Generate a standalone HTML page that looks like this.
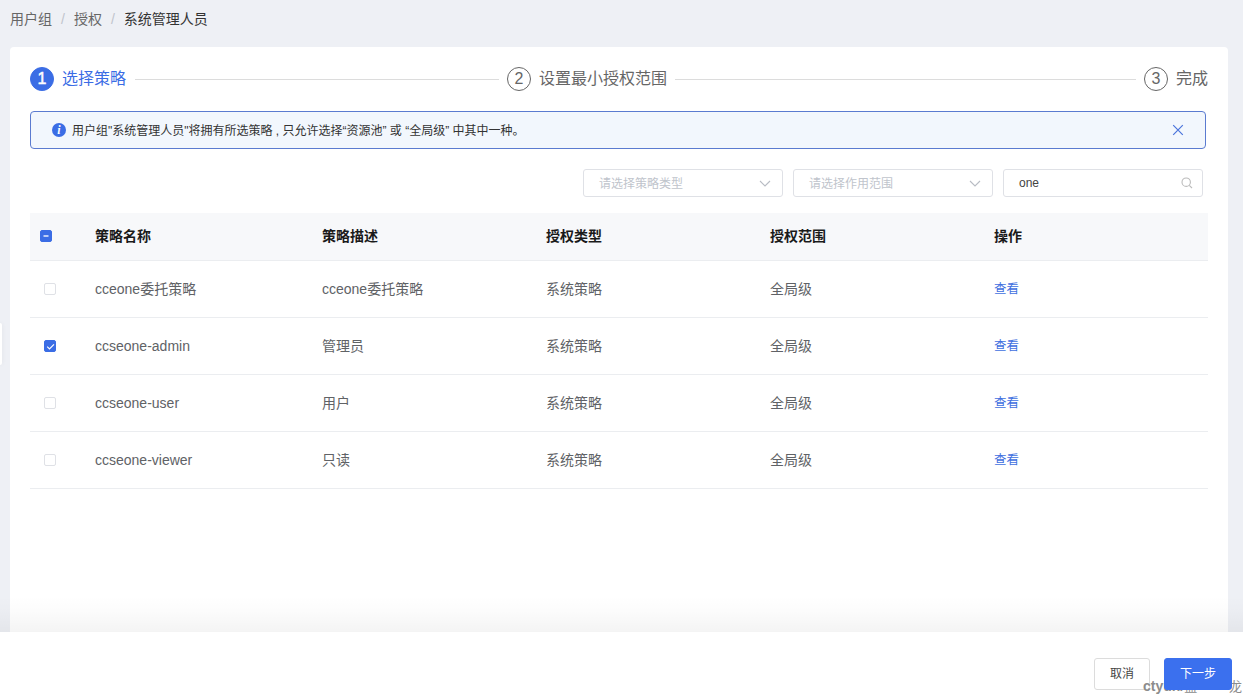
<!DOCTYPE html>
<html lang="zh-CN">
<head>
<meta charset="utf-8">
<title>授权</title>
<style>
*{box-sizing:border-box;margin:0;padding:0}
html,body{width:1243px;height:700px;overflow:hidden}
body{background:#eef0f5;font-family:"Liberation Sans","Noto Sans CJK SC",sans-serif;color:#333;position:relative;font-size:14px}
.crumb{position:absolute;left:10px;top:9px;height:20px;line-height:20px;font-size:14px;color:#666;white-space:nowrap}
.crumb .sep{color:#c0c4cc;margin:0 9px}
.crumb .cur{color:#333}
.card{position:absolute;left:10px;top:47px;width:1218px;height:653px;background:#fff;border-radius:4px}
.step{position:absolute;top:67px;height:24px;line-height:24px;font-size:16px;color:#666;white-space:nowrap}
.step .num{display:inline-block;width:24px;height:24px;border-radius:50%;border:1px solid #666;text-align:center;line-height:22px;font-size:16px;vertical-align:top;margin-right:8px;color:#666}
.step.on{color:#3b6de5}
.step.on .num{background:#3b6de5;border-color:#3b6de5;color:#fff;-webkit-text-stroke:.45px #fff}
.line{position:absolute;top:79px;height:1px;background:#dcdcdc}
.alert{position:absolute;left:30px;top:111px;width:1176px;height:38px;border:1px solid #5b7bd0;border-radius:4px;background:#f2f7fd;font-size:12px;color:#333;line-height:36px;white-space:nowrap}
.alert .ico{position:absolute;left:21px;top:11px;width:14px;height:14px}
.alert .txt{position:absolute;left:41px;top:1px}
.alert .close{position:absolute;left:1141px;top:12px;width:12px;height:12px}
.sel{position:absolute;top:169px;width:200px;height:28px;border:1px solid #dfe1e6;border-radius:3px;background:#fff;font-size:12px;color:#c0c4cc;line-height:28px;padding-left:15px;white-space:nowrap}
.sel svg{position:absolute;right:11px;top:10px}
.sel.inp{color:#444;line-height:26px}
table{position:absolute;left:30px;top:213px;width:1178px;border-collapse:collapse;table-layout:fixed;font-size:14px}
th{height:47px;background:#f7f8fa;text-align:left;font-weight:bold;color:#1a1a1a;padding:0 0 2px;border-bottom:1px solid #ebedf0}
td{height:57px;border-bottom:1px solid #ebedf0;color:#606266;padding:0 0 2px}
td a{color:#3f70e0;font-size:12.5px;text-decoration:none}
.lat{position:relative;top:1px}
.cb{position:absolute;width:12px;height:12px;border:1px solid #dfe1e6;border-radius:2px;background:#fff}
.cb.on{background:#3b6de5;border-color:#3b6de5}
.foot{position:absolute;left:0;top:632px;width:1243px;height:68px;background:#fff}
.shade{position:absolute;left:0;top:596px;width:1243px;height:36px;background:linear-gradient(to bottom,rgba(0,0,0,0),rgba(0,0,0,.012) 40%,rgba(0,0,0,.045))}
.btn{position:absolute;top:658px;height:32px;line-height:30px;border:1px solid #dcdcdc;border-radius:3px;font-size:12px;text-align:center;color:#444;background:#fff}
.btn.pri{background:#3b70ee;border-color:#3b70ee;color:#fff}
.wm{position:absolute;left:1143px;top:676px;font-size:14px;font-weight:bold;color:#8c8c8c;white-space:nowrap;line-height:20px}
.wm i{font-style:normal;letter-spacing:2px;margin-left:2px}
.wm b{font-weight:normal;font-size:13px}
.tab{position:absolute;left:0;top:323px;width:2px;height:42px;background:#fff;border-radius:0 4px 4px 0;box-shadow:0 0 4px rgba(0,0,0,.08)}
</style>
</head>
<body>
<div class="crumb">用户组<span class="sep">/</span>授权<span class="sep">/</span><span class="cur">系统管理人员</span></div>
<div class="card"></div>
<div class="tab"></div>

<div class="step on" style="left:30px"><span class="num">1</span>选择策略</div>
<div class="line" style="left:135px;width:364px"></div>
<div class="step" style="left:507px"><span class="num">2</span>设置最小授权范围</div>
<div class="line" style="left:675px;width:461px"></div>
<div class="step" style="left:1144px"><span class="num">3</span>完成</div>

<div class="alert">
<svg class="ico" viewBox="0 0 14 14"><circle cx="7" cy="7" r="7" fill="#3b6de5"/><text x="7" y="11.2" font-size="12" font-family="Liberation Serif,serif" font-style="italic" font-weight="bold" fill="#fff" text-anchor="middle">i</text></svg>
<span class="txt">用户组"系统管理人员"将拥有所选策略 , 只允许选择“资源池” 或 “全局级” 中其中一种。</span>
<svg class="close" viewBox="0 0 12 12"><path d="M1.2 1.2L10.8 10.8M10.8 1.2L1.2 10.8" stroke="#4a74dc" stroke-width="1.2" fill="none"/></svg>
</div>

<div class="sel" style="left:583px">请选择策略类型<svg width="12" height="8" viewBox="0 0 12 8"><path d="M1 1L6 6L11 1" stroke="#b8bcc4" stroke-width="1.1" fill="none"/></svg></div>
<div class="sel" style="left:793px">请选择作用范围<svg width="12" height="8" viewBox="0 0 12 8"><path d="M1 1L6 6L11 1" stroke="#b8bcc4" stroke-width="1.1" fill="none"/></svg></div>
<div class="sel inp" style="left:1003px">one<svg width="12" height="12" viewBox="0 0 12 12" style="top:7px;right:9px"><circle cx="5.2" cy="5.2" r="4.2" stroke="#bbb" stroke-width="1.1" fill="none"/><path d="M8.3 8.3L11 11" stroke="#bbb" stroke-width="1.1"/></svg></div>

<table>
<colgroup><col style="width:65px"><col style="width:227px"><col style="width:224px"><col style="width:224px"><col style="width:224px"><col></colgroup>
<tr><th></th><th>策略名称</th><th>策略描述</th><th>授权类型</th><th>授权范围</th><th>操作</th></tr>
<tr><td></td><td>cceone委托策略</td><td>cceone委托策略</td><td>系统策略</td><td>全局级</td><td><a>查看</a></td></tr>
<tr><td></td><td><span class="lat">ccseone-admin</span></td><td>管理员</td><td>系统策略</td><td>全局级</td><td><a>查看</a></td></tr>
<tr><td></td><td><span class="lat">ccseone-user</span></td><td>用户</td><td>系统策略</td><td>全局级</td><td><a>查看</a></td></tr>
<tr><td></td><td><span class="lat">ccseone-viewer</span></td><td>只读</td><td>系统策略</td><td>全局级</td><td><a>查看</a></td></tr>
</table>
<div class="cb on" style="left:40px;top:230px"><svg width="12" height="12" viewBox="0 0 12 12" style="position:absolute;left:-1px;top:-1px"><path d="M3.5 6H8.5" stroke="#e8eefc" stroke-width="1.5"/></svg></div>
<div class="cb" style="left:44px;top:283px"></div>
<div class="cb on" style="left:44px;top:340px"><svg width="12" height="12" viewBox="0 0 12 12" style="position:absolute;left:-1px;top:-1px"><path d="M3.2 6.6L5.5 8.9L10 4.3" stroke="#fff" stroke-width="1.15" fill="none"/></svg></div>
<div class="cb" style="left:44px;top:397px"></div>
<div class="cb" style="left:44px;top:454px"></div>

<div class="shade"></div>
<div class="foot"></div>
<div class="btn" style="left:1094px;width:56px">取消</div>
<div class="wm">ctyun/<b>蓝</b><i>****</i><b>龙</b></div>
<div class="btn pri" style="left:1164px;width:68px">下一步</div>

</body>
</html>
